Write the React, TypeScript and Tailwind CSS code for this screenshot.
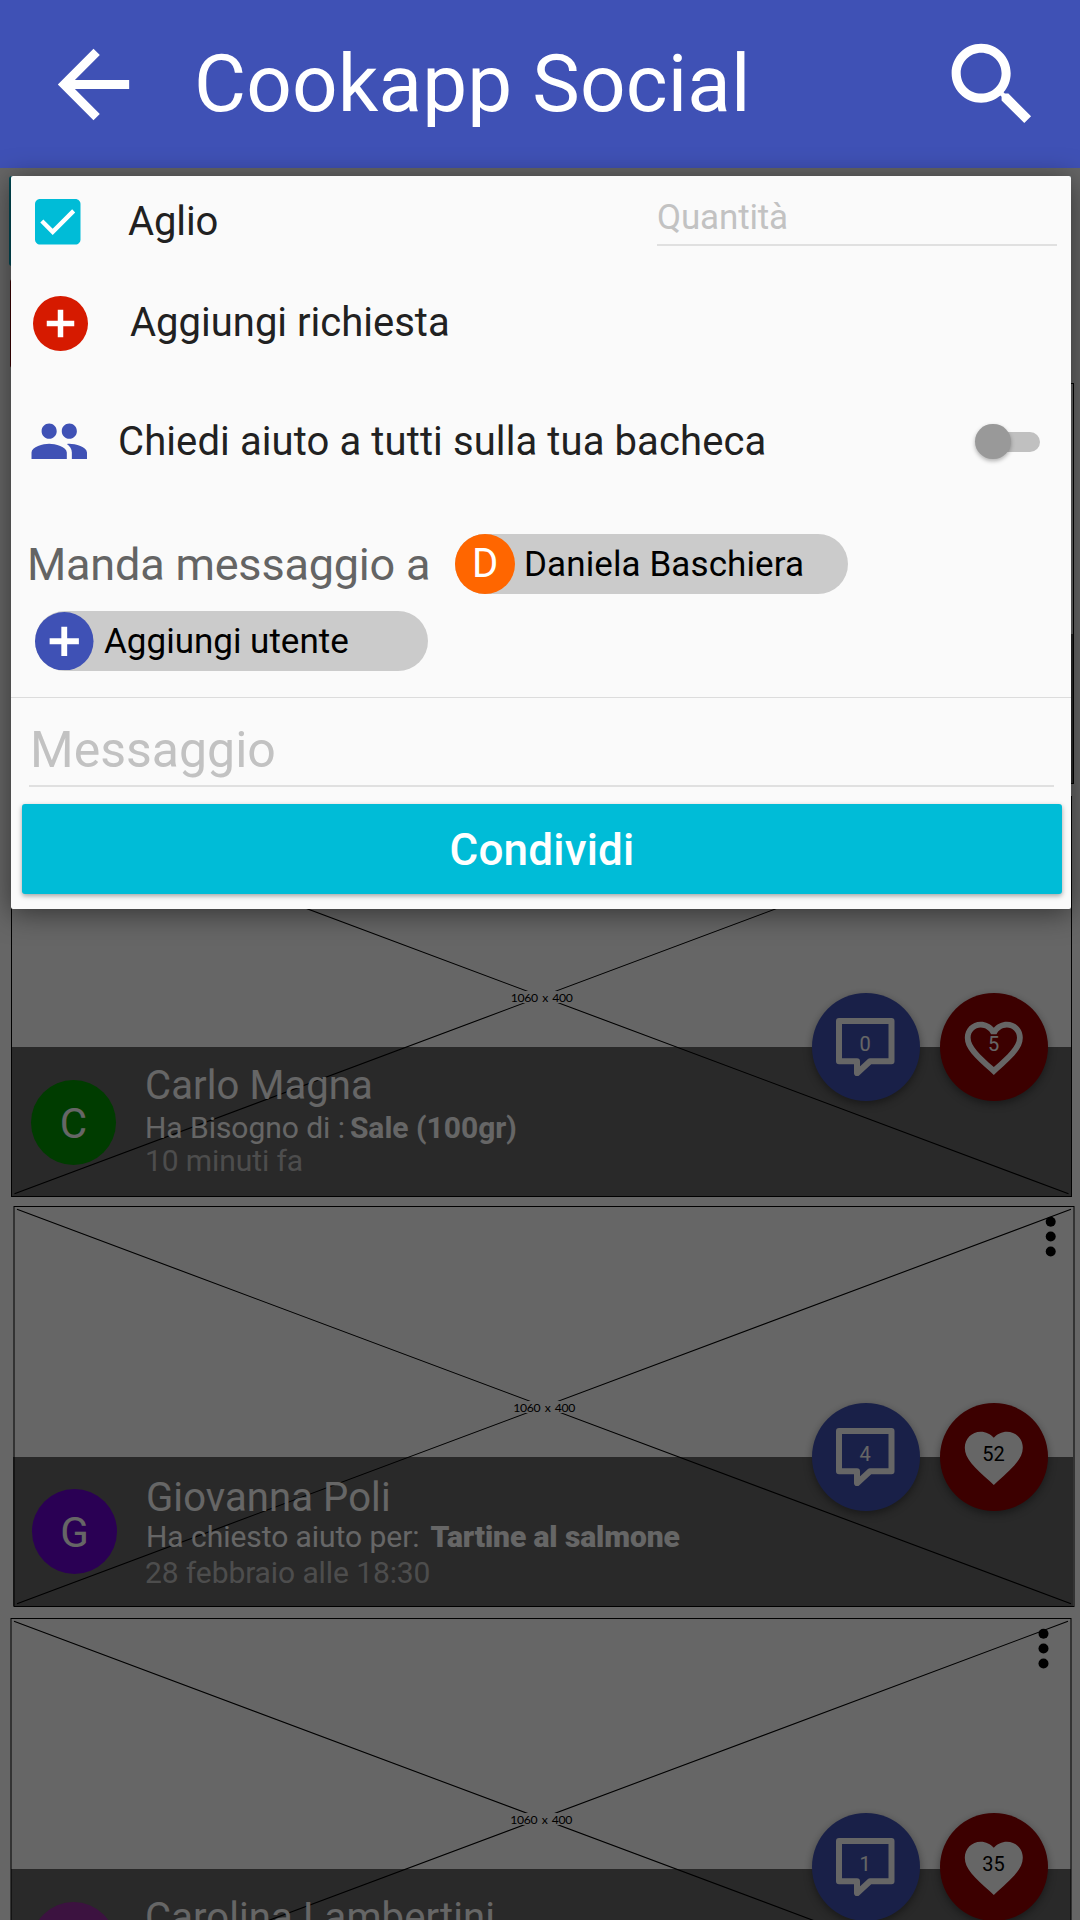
import React from 'react';

type Post = {
  name: string;
  initial: string;
  avatar: string;
  label?: string;
  subject?: string;
  time?: string;
  comments: number;
  likes: number;
  liked: boolean;
  spacing: string;
  inset: string;
  captionPad: string;
  avatarPad: string;
  labelRow: string;
  subjectStyle?: string;
  timeRow: string;
  fabTop: string;
  frameX: number;
  dotsX?: number;
};

const posts: Post[] = [
  {
    name: '', initial: '', avatar: 'bg-[#009600]', comments: 0, likes: 0, liked: false,
    spacing: 'mt-[15px]', inset: 'ml-[13px]', captionPad: 'pt-[15px]', avatarPad: 'ml-5',
    labelRow: 'leading-[39px]', timeRow: 'leading-[28px]', fabTop: 'top-[197px]', frameX: 13.5,
  },
  {
    name: 'Carlo Magna', initial: 'C', avatar: 'bg-[#009600]', label: 'Ha Bisogno di :', subject: 'Sale (100gr)',
    time: '10 minuti fa', comments: 0, likes: 5, liked: false,
    spacing: 'mt-3', inset: 'ml-[12px]', captionPad: 'pt-[16px]', avatarPad: 'ml-[19px] mt-[33px]',
    labelRow: 'leading-[37px] gap-[5px]', subjectStyle: 'font-bold', timeRow: 'leading-[30px]',
    fabTop: 'top-[197px]', frameX: 11.5,
  },
  {
    name: 'Giovanna Poli', initial: 'G', avatar: 'bg-[#6a00d2]', label: 'Ha chiesto aiuto per:', subject: 'Tartine al salmone',
    time: '28 febbraio alle 18:30', comments: 4, likes: 52, liked: true,
    spacing: 'mt-[9px]', inset: 'ml-[13px]', captionPad: 'pt-[18px]', avatarPad: 'ml-[19px] mt-[32px]',
    labelRow: 'leading-[31px] gap-[11px]', subjectStyle: 'font-black tracking-[-0.1px]', timeRow: 'ml-[-1px] leading-[41px]',
    fabTop: 'top-[197px]', frameX: 14, dotsX: 1050.7,
  },
  {
    name: 'Carolina Lambertini', initial: 'C', avatar: 'bg-[#962da0]', comments: 1, likes: 35, liked: true,
    spacing: 'mt-[11px]', inset: 'ml-[11px]', captionPad: 'pt-[26px]', avatarPad: 'ml-[20px] mt-[33px]',
    labelRow: 'leading-[33px]', timeRow: 'leading-[39px]', fabTop: 'top-[195px]', frameX: 11, dotsX: 1043.5,
  },
];

function Placeholder({ x, dotsX }: { x: number; dotsX?: number }) {
  const cx = x + 530.3;
  return (
    <svg className="block" width="1080" height="401" viewBox="0 0 1080 401">
      <rect x={x} y="0.5" width="1060" height="400" fill="#fff" stroke="#000" />
      <path
        d={`M${x + 3} 3.3L${x + 1057} 397.7M${x + 3} 397.7L${x + 1057} 3.3`}
        stroke="#000"
        strokeWidth="1.1"
        fill="none"
      />
      <rect x={cx - 31} y="195" width="62" height="12" fill="#fff" />
      <text
        x={cx}
        y="206"
        textAnchor="middle"
        fontSize="12.2"
        wordSpacing="1.5"
        textLength="62"
        className="font-['Lato',sans-serif]"
      >
        1060 x 400
      </text>
      {dotsX && [15.7, 30.5, 45.5].map((y) => <circle key={y} cx={dotsX} cy={y} r="5" fill="#000" />)}
    </svg>
  );
}

function CommentFab({ count }: { count: number }) {
  return (
    <button className="relative flex size-[108px] items-center justify-center rounded-full bg-[#3f51b5] text-white shadow-[0_3px_8px_rgba(0,0,0,0.4)]">
      <svg className="mr-px" width="58.5" height="58.5" viewBox="0 0 58.5 58.5" fill="none" stroke="currentColor" strokeWidth="6" strokeLinejoin="round">
        <path d="M3 3H55.5V43.3H34L21 55.3V43.3H3Z" />
      </svg>
      <span className="absolute inset-x-0 top-[37px] pr-[2px] text-center text-[20px] leading-[28px]">{count}</span>
    </button>
  );
}

function LikeFab({ count, liked }: { count: number; liked: boolean }) {
  return (
    <button className="relative flex size-[108px] items-center justify-center rounded-full bg-[#960000] text-white shadow-[0_3px_8px_rgba(0,0,0,0.4)]">
      <svg className="mt-[2px] mr-px" width="69.6" height="69.6" viewBox="0 0 24 24" fill="currentColor">
        {liked ? (
          <path d="M12 21.35l-1.45-1.32C5.4 15.36 2 12.28 2 8.5 2 5.42 4.42 3 7.5 3c1.74 0 3.41.81 4.5 2.09C13.09 3.81 14.76 3 16.5 3 19.58 3 22 5.42 22 8.5c0 3.78-3.4 6.86-8.55 11.54L12 21.35z" />
        ) : (
          <path d="M16.5 3c-1.74 0-3.41.81-4.5 2.09C10.91 3.81 9.24 3 7.5 3 4.42 3 2 5.42 2 8.5c0 3.78 3.4 6.86 8.55 11.54L12 21.35l1.45-1.32C18.6 15.36 22 12.28 22 8.5 22 5.42 19.58 3 16.5 3zm-4.4 15.55l-.1.1-.1-.1C7.14 14.24 4 11.39 4 8.5 4 6.5 5.5 5 7.5 5c1.54 0 3.04.99 3.57 2.36h1.87C13.46 5.99 14.96 5 16.5 5c2 0 3.5 1.5 3.5 3.5 0 2.89-3.14 5.74-7.9 10.05z" />
        )}
      </svg>
      <span className={`absolute inset-x-0 top-[37px] pr-px text-center text-[20px] leading-[28px] ${liked ? 'text-black' : 'text-white'}`}>
        {count}
      </span>
    </button>
  );
}

function PostCard({ post }: { post: Post }) {
  return (
    <article className={`relative h-[401px] w-[1080px] shrink-0 ${post.spacing}`}>
      <Placeholder x={post.frameX} dotsX={post.dotsX} />
      <div className={`absolute bottom-[1px] left-0 flex h-[149px] w-[1060px] items-start bg-black/60 text-white ${post.inset}`}>
        <div className={`flex size-[85px] shrink-0 items-center justify-center rounded-full pt-[2px] text-[42px] ${post.avatar} ${post.avatarPad}`}>
          {post.initial}
        </div>
        <div className={`ml-[29px] flex flex-col whitespace-nowrap ${post.captionPad}`}>
          <h2 className="text-[40px] leading-[46px] tracking-[0.1px]">{post.name}</h2>
          {post.label && (
            <>
              <div className={`flex text-[30px] ${post.labelRow}`}>
                <span className="tracking-[-0.05px]">{post.label}</span>
                <b className={post.subjectStyle}>{post.subject}</b>
              </div>
              <time className={`text-[30px] tracking-[-0.1px] text-white/60 ${post.timeRow}`}>{post.time}</time>
            </>
          )}
        </div>
      </div>
      <div className={`absolute left-[812px] flex gap-5 ${post.fabTop}`}>
        <CommentFab count={post.comments} />
        <LikeFab count={post.likes} liked={post.liked} />
      </div>
    </article>
  );
}

function RequestDialog() {
  return (
    <section className="absolute top-2 left-[11px] h-[733px] w-[1060px] rounded-[2px] bg-[#fafafa] text-[#212121] shadow-[0_4px_28px_rgba(0,0,0,0.5)]">
      <div className="flex h-[92px] items-start">
        <div className="flex h-full items-center">
          <svg className="ml-6" width="45.5" height="45.5" viewBox="3 3 18 18">
            <path fill="#00bcd7" d="M19 3H5c-1.11 0-2 .9-2 2v14c0 1.1.89 2 2 2h14c1.11 0 2-.9 2-2V5c0-1.1-.89-2-2-2z" />
            <path fill="none" stroke="#fff" strokeWidth="1.7" d="M5.7 11.7L10 16L18.3 7.7" />
          </svg>
          <span className="ml-[47.5px] text-[40px] tracking-[-0.1px]">Aglio</span>
        </div>
        <div className="mr-[14px] ml-auto h-[70px] w-[400px] border-b-2 border-[#e0e0e0] pt-[16px] text-[35px] leading-[52px] tracking-[-0.15px] text-[#c2c2c2]">
          Quantità
        </div>
      </div>

      <div className="flex h-[111px] items-center">
        <svg className="ml-[22px]" width="55" height="55" viewBox="2 2 20 20" fill="#d61a00">
          <circle cx="12" cy="12" r="10" />
          <path fill="#fff" d="M17 13h-4v4h-2v-4H7v-2h4V7h2v4h4v2z" />
        </svg>
        <span className="mb-px ml-[42px] text-[40px]">Aggiungi richiesta</span>
      </div>

      <div className="flex h-[125px] items-center">
        <svg className="ml-[18px]" width="60.5" height="60.5" viewBox="0 0 24 24" fill="#3f51b5">
          <path d="M16 11c1.66 0 2.99-1.34 2.99-3S17.66 5 16 5c-1.66 0-3 1.34-3 3s1.34 3 3 3zm-8 0c1.66 0 2.99-1.34 2.99-3S9.66 5 8 5C6.34 5 5 6.34 5 8s1.34 3 3 3zm0 2c-2.33 0-7 1.17-7 3.5V19h14v-2.5c0-2.33-4.67-3.5-7-3.5zm8 0c-.29 0-.62.02-.97.05 1.16.84 1.97 1.97 1.97 3.45V19h6v-2.5c0-2.33-4.67-3.5-7-3.5z" />
        </svg>
        <span className="ml-[28.5px] text-[40px] tracking-[0.1px]">Chiedi aiuto a tutti sulla tua bacheca</span>
        <div className="relative mr-[31px] ml-auto flex h-9 w-[65px] items-center justify-end">
          <div className="h-5 w-[48px] rounded-full bg-[#c0c0c0]" />
          <div className="absolute top-0 left-0 size-[35.5px] rounded-full bg-[#999] shadow-[0_2px_4px_rgba(0,0,0,0.3)]" />
        </div>
      </div>

      <div className="mt-[30px] flex h-[60px] items-center">
        <span className="w-[404px] pt-[2px] pl-4 text-[45px] leading-[56px] tracking-[-0.2px] whitespace-nowrap text-[#646464]">
          Manda messaggio a
        </span>
        <div className="ml-10 flex h-[60px] w-[393px] items-center rounded-full bg-[#cbcbcb]">
          <span className="flex size-[60px] items-center justify-center rounded-full bg-[#ff6600] text-[40px] text-white">D</span>
          <span className="ml-[9px] pt-[2px] text-[35px] leading-[42px] tracking-[0.1px] text-black">Daniela Baschiera</span>
        </div>
      </div>

      <div className="mt-[17px] ml-6 flex h-[60px] w-[393px] items-center rounded-full bg-[#cbcbcb]">
        <svg width="58.5" height="58.5" viewBox="2 2 20 20">
          <circle cx="12" cy="12" r="10" fill="#3f51b5" />
          <path fill="#fff" d="M17 13h-4v4h-2v-4H7v-2h4V7h2v4h4v2z" />
        </svg>
        <span className="ml-[10.5px] pt-[2px] text-[35px] leading-[42px] text-black">Aggiungi utente</span>
      </div>

      <hr className="mt-[26px] h-px border-0 bg-[#dcdcdc]" />
      <div className="mr-[17.5px] ml-[18px] h-[89px] border-b-2 border-[#e0e0e0] pt-[22.5px] pl-px text-[50px] leading-[58px] text-[#c2c2c2]">
        Messaggio
      </div>
      <button className="mt-[17px] ml-[11px] flex h-[90px] w-[1040px] items-center justify-center rounded-[3px] bg-[#00bcd7] pt-[2px] text-[44px] font-medium tracking-[0.2px] text-white shadow-[0_2px_5px_rgba(0,0,0,0.35)]">
        Condividi
      </button>
    </section>
  );
}

export default function App() {
  return (
    <div className="flex h-[1920px] w-[1080px] flex-col overflow-hidden bg-white font-['Roboto',sans-serif]">
      <header className="flex h-[168px] shrink-0 items-center bg-[#3f51b5] text-white">
        <svg className="ml-10" width="107" height="107" viewBox="0 0 24 24" fill="currentColor">
          <path d="M20 11H7.83l5.59-5.59L12 4l-8 8 8 8 1.41-1.41L7.83 13H20v-2z" />
        </svg>
        <h1 className="ml-[47px] text-[80px] tracking-[0.15px]">Cookapp Social</h1>
        <svg className="mr-[33px] ml-auto" width="109" height="109" viewBox="0 0 24 24" fill="currentColor">
          <path d="M15.5 14h-.79l-.28-.27C15.41 12.59 16 11.11 16 9.5 16 5.91 13.09 3 9.5 3S3 5.91 3 9.5 5.91 16 9.5 16c1.61 0 3.09-.59 4.23-1.57l.27.28v.79l5 4.99L20.49 19l-4.99-5zm-6 0C7.01 14 5 11.99 5 9.5S7.01 5 9.5 5 14 7.01 14 9.5 11.99 14 9.5 14z" />
        </svg>
      </header>
      <main className="relative h-[1752px]">
        <div className="flex h-full flex-col overflow-hidden">
          <div className="mt-2 ml-[9px] h-[90px] w-[1062px] shrink-0 rounded-[3px] bg-[#00bcd7]" />
          <div className="mt-[13px] ml-[10px] h-[89px] w-[1061px] shrink-0 rounded-[3px] bg-[#960000]" />
          {posts.map((post, i) => (
            <PostCard key={i} post={post} />
          ))}
        </div>
        <div className="absolute inset-0 bg-black/60" />
        <RequestDialog />
      </main>
    </div>
  );
}
